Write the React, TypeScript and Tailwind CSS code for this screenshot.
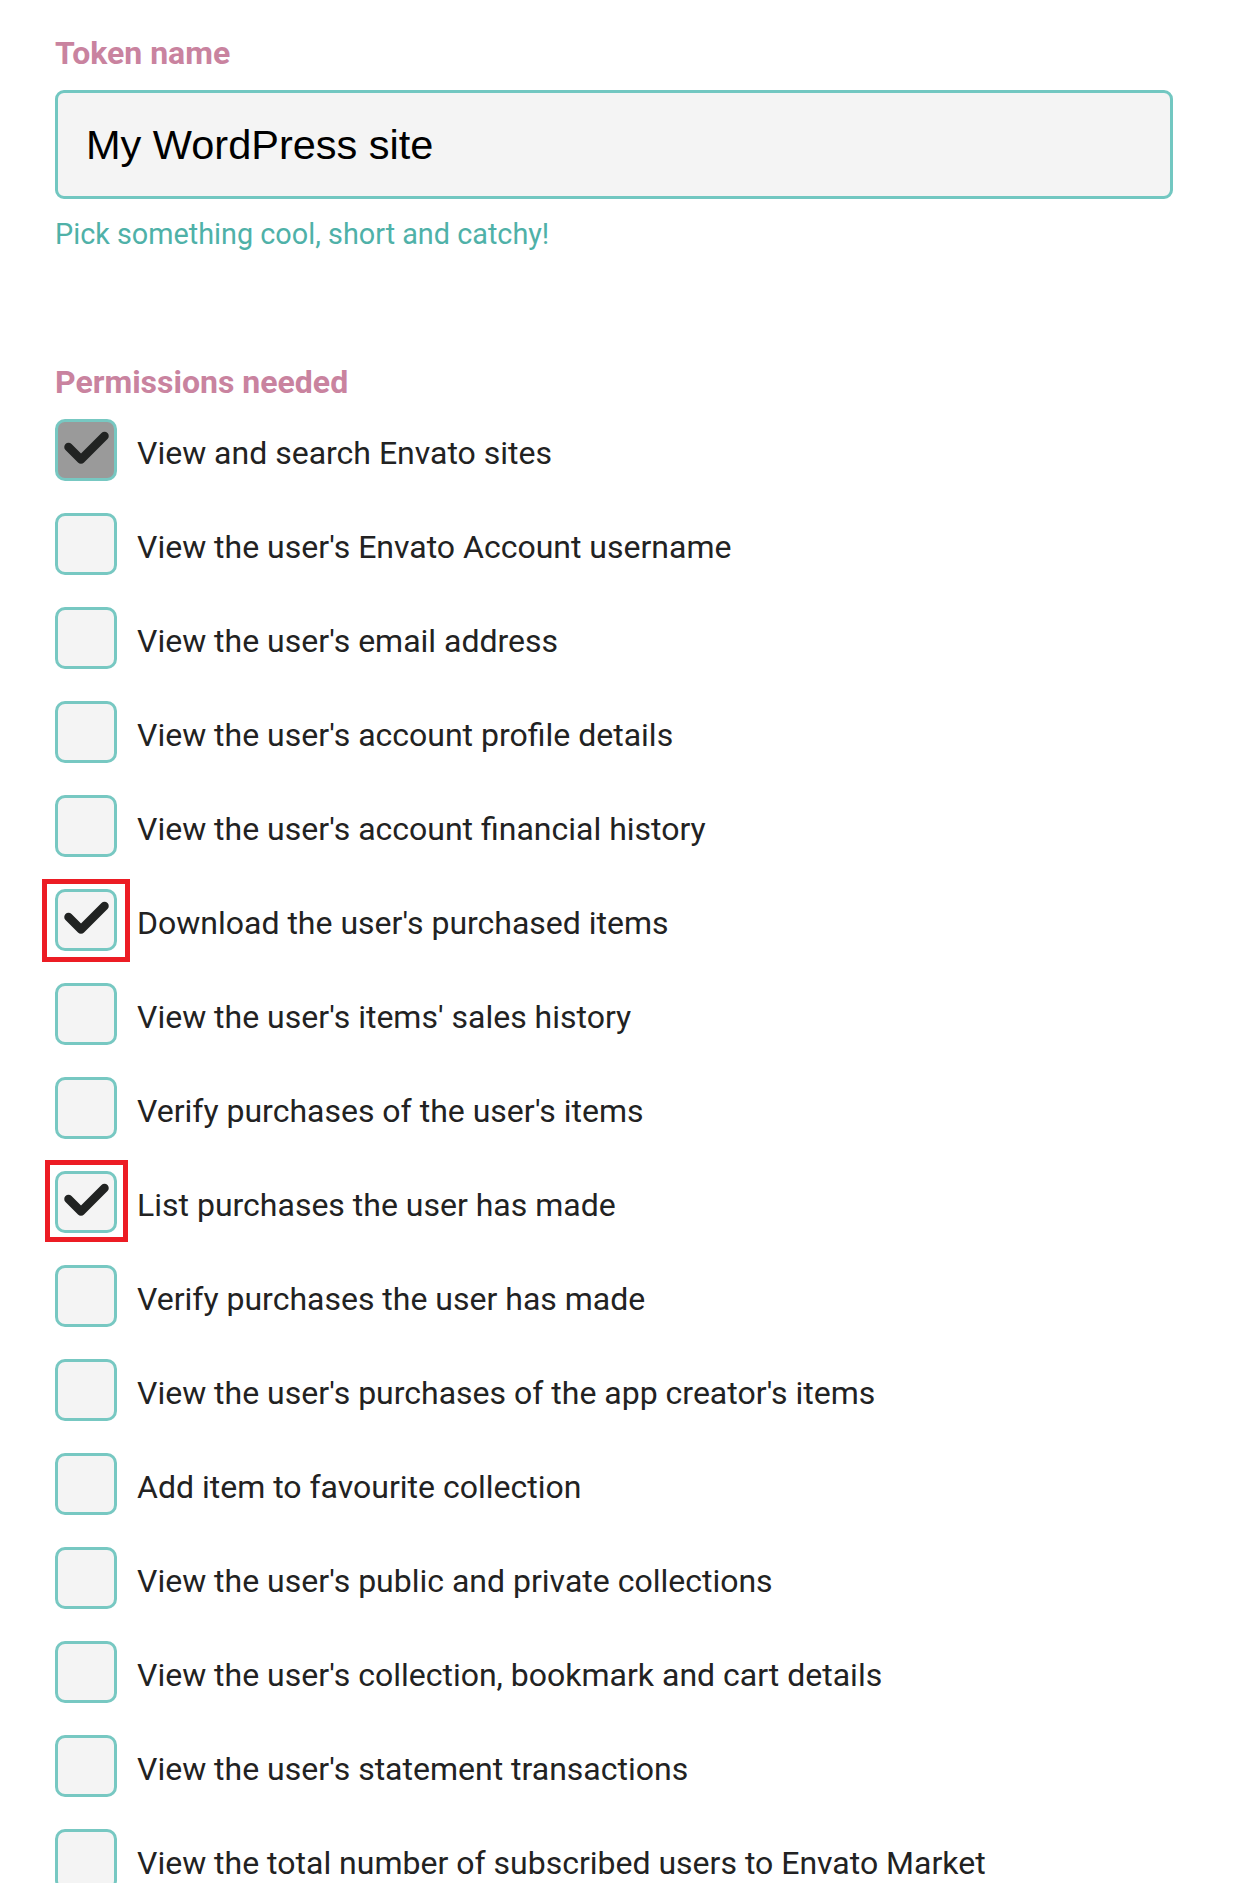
type Permission = { label: string; checked?: boolean; disabled?: boolean; marked?: "a" | "b" };

const PERMISSIONS: Permission[] = [
  { label: "View and search Envato sites", checked: true, disabled: true },
  { label: "View the user's Envato Account username" },
  { label: "View the user's email address" },
  { label: "View the user's account profile details" },
  { label: "View the user's account financial history" },
  { label: "Download the user's purchased items", checked: true, marked: "a" },
  { label: "View the user's items' sales history" },
  { label: "Verify purchases of the user's items" },
  { label: "List purchases the user has made", checked: true, marked: "b" },
  { label: "Verify purchases the user has made" },
  { label: "View the user's purchases of the app creator's items" },
  { label: "Add item to favourite collection" },
  { label: "View the user's public and private collections" },
  { label: "View the user's collection, bookmark and cart details" },
  { label: "View the user's statement transactions" },
  { label: "View the total number of subscribed users to Envato Market" },
];

function CheckMark() {
  return (
    <svg viewBox="0 0 56 56" className="w-[56px] h-[56px]">
      <polyline
        points="10.5,25 23,37.5 46.5,14"
        fill="none"
        stroke="#212322"
        strokeWidth="8.5"
        strokeLinecap="round"
        strokeLinejoin="round"
      />
    </svg>
  );
}

function PermissionRow({ p }: { p: Permission }) {
  return (
    <label className="flex items-center h-[62px] gap-[20px]">
      <span className="relative shrink-0">
        <span
          className={
            "flex items-center justify-center w-[62px] h-[62px] rounded-[10px] border-[3px] border-[#77c8c2] " +
            (p.disabled ? "bg-[#9a9a9a]" : "bg-[#f4f4f4]")
          }
        >
          {p.checked && <CheckMark />}
        </span>
        {p.marked === "a" && (
          <span className="absolute left-[-13px] top-[-10px] w-[88px] h-[83px] border-[5px] border-[#ec1c24]" />
        )}
        {p.marked === "b" && (
          <span className="absolute left-[-10px] top-[-11px] w-[83px] h-[82px] border-[5px] border-[#ec1c24]" />
        )}
      </span>
      <span className="pt-[5px] text-[32px] leading-[38px] text-[#222222]">{p.label}</span>
    </label>
  );
}

export default function App() {
  return (
    <div className="min-h-screen bg-white pl-[55px] pt-[35px] font-['Roboto',sans-serif] overflow-hidden">
      <div className="text-[32px] leading-[36px] font-bold text-[#c9839f]">Token name</div>
      <input
        type="text"
        defaultValue="My WordPress site"
        className="mt-[19px] block w-[1118px] h-[109px] px-[28px] rounded-[9px] border-[3px] border-[#72c7c1] bg-[#f4f4f4] text-[41.5px] text-black font-['Liberation_Sans',Arial,sans-serif] outline-none"
      />
      <div className="mt-[18px] text-[28.8px] leading-[34px] text-[#4fb1a8]">Pick something cool, short and catchy!</div>

      <div className="mt-[113px] text-[32px] leading-[36px] font-bold text-[#c9839f]">Permissions needed</div>
      <div className="mt-[19px] flex flex-col gap-[32px]">
        {PERMISSIONS.map((p) => (
          <PermissionRow key={p.label} p={p} />
        ))}
      </div>
    </div>
  );
}
